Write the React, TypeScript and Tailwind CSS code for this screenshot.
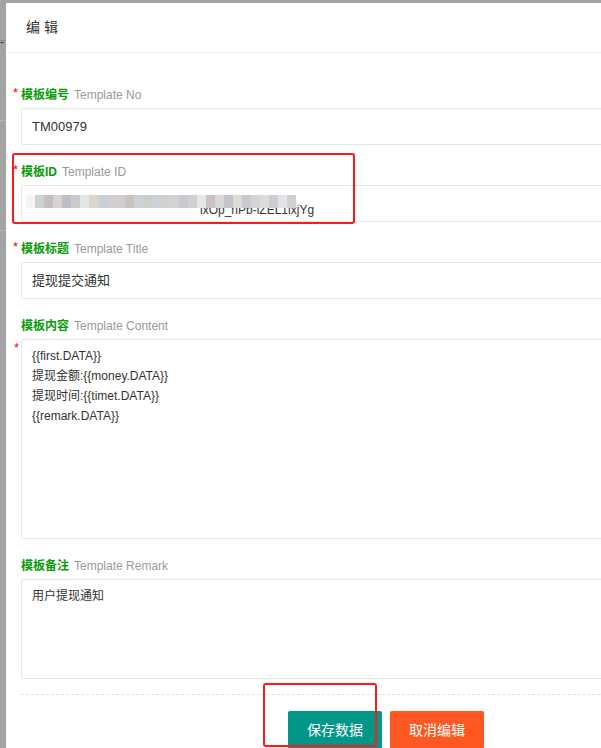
import React from 'react'

const font = { fontFamily: '"Liberation Sans", "Noto Sans CJK SC", sans-serif' }

const mosaic = [
  '#f6f4f2', '#cdd1d4', '#c5c0bf', '#d6d3d1', '#c0bdc8', '#cbcbc9', '#e2e6e7', '#d9d6d0', '#c8d0d7',
  '#d3cfd0', '#d2ced0', '#cac4c1', '#ccd2d1', '#ccd0cd', '#cfd0d3', '#d1d1d4', '#d4d2d0', '#c9c8cc',
  '#d0d0d3', '#e8e5e8', '#cbc2c5', '#d6d8db', '#c6c4cb', '#dcdcd7', '#c9c9cf', '#d5d5d7', '#dddcd8',
  '#ccccd2', '#e4e2e2', '#d0cfd4',
]

function Label({ zh, en, star }: { zh: string; en: string; star?: boolean }) {
  return (
    <div className="relative h-[20px] flex items-center gap-[5px] leading-none">
      {star && <span className="absolute left-[-8px] top-[1px] text-[#f00] text-[13px]">*</span>}
      <span className="text-[12px] text-[#0a9a0a] font-bold">{zh}</span>
      <span className="text-[12px] text-[#9a9a9a]">{en}</span>
    </div>
  )
}

function Input({ children }: { children?: React.ReactNode }) {
  return (
    <div className="relative mt-[3px] h-[37px] border border-[#e6e6e6] rounded-[2px] flex items-center pl-[10px] text-[13px] text-[#333]">
      {children}
    </div>
  )
}

export default function App() {
  return (
    <div style={font} className="relative w-[601px] h-[748px] overflow-hidden bg-[#a3a3a3]">
      {/* page behind the modal */}
      <div className="absolute left-0 top-[36px] w-[6px] h-[14px] text-[12px] text-[#333] leading-none">-</div>
      <div className="absolute left-0 top-[40px] w-[6px] h-[1px] bg-[#8c8c8c]" />
      <div className="absolute left-0 top-[120px] w-[6px] h-[1px] bg-[#b5b5b5]" />
      <div className="absolute left-0 top-[230px] w-[6px] h-[1px] bg-[#b5b5b5]" />

      <div className="ml-[6px] mt-[3px] w-[760px] h-[745px] bg-white">
        <div className="h-[50px] border-b border-[#eee] flex items-center pl-[20px] text-[14px] text-[#333]">
          编 辑
        </div>

        <div className="pl-[15px] pt-[32px]">
          <Label zh="模板编号" en="Template No" star />
          <Input>TM00979</Input>

          <div className="mt-[17px]">
            <Label zh="模板ID" en="Template ID" star />
            <Input>
              <span className="pl-[168px] pt-[12px] text-[12px] text-[#333]">ιxOp_nPb-iZEL1ixjYg</span>
              <div className="absolute left-[4px] top-[9px] flex">
                {mosaic.map((c, i) => (
                  <div key={i} className="w-[9px] h-[13px]" style={{ background: c }} />
                ))}
              </div>
            </Input>
          </div>

          <div className="mt-[17px]">
            <Label zh="模板标题" en="Template Title" star />
            <Input>提现提交通知</Input>
          </div>

          <div className="mt-[17px]">
            <Label zh="模板内容" en="Template Content" />
            <div className="relative mt-[3px] h-[200px] border border-[#e6e6e6] rounded-[2px] pl-[10px] pt-[6px] text-[12px] text-[#333] leading-[20px]">
              <span className="absolute left-[-8px] top-[1px] text-[#f00] text-[13px] leading-none">*</span>
              <div>{'{{first.DATA}}'}</div>
              <div>提现金额:{'{{money.DATA}}'}</div>
              <div>提现时间:{'{{timet.DATA}}'}</div>
              <div>{'{{remark.DATA}}'}</div>
            </div>
          </div>

          <div className="mt-[17px]">
            <Label zh="模板备注" en="Template Remark" />
            <div className="mt-[3px] h-[100px] border border-[#e6e6e6] rounded-[2px] pl-[10px] pt-[6px] text-[12px] text-[#333] leading-[20px]">
              用户提现通知
            </div>
          </div>

          <div className="mt-[15px] border-t border-dashed border-[#e2e2e2]" />

          <div className="mt-[16px] pl-[267px] flex gap-[8px]">
            <button className="w-[94px] h-[38px] rounded-[2px] bg-[#009688] text-white text-[14px]">保存数据</button>
            <button className="w-[94px] h-[38px] rounded-[2px] bg-[#ff5722] text-white text-[14px]">取消编辑</button>
          </div>
        </div>
      </div>

      {/* annotation boxes */}
      <div className="absolute left-[12px] top-[153px] w-[343px] h-[71px] border-[2px] border-[#ff1a1a] rounded-[3px]" />
      <div className="absolute left-[263px] top-[683px] w-[114px] h-[64px] border-[2px] border-[#ff1a1a] rounded-[3px]" />
    </div>
  )
}
